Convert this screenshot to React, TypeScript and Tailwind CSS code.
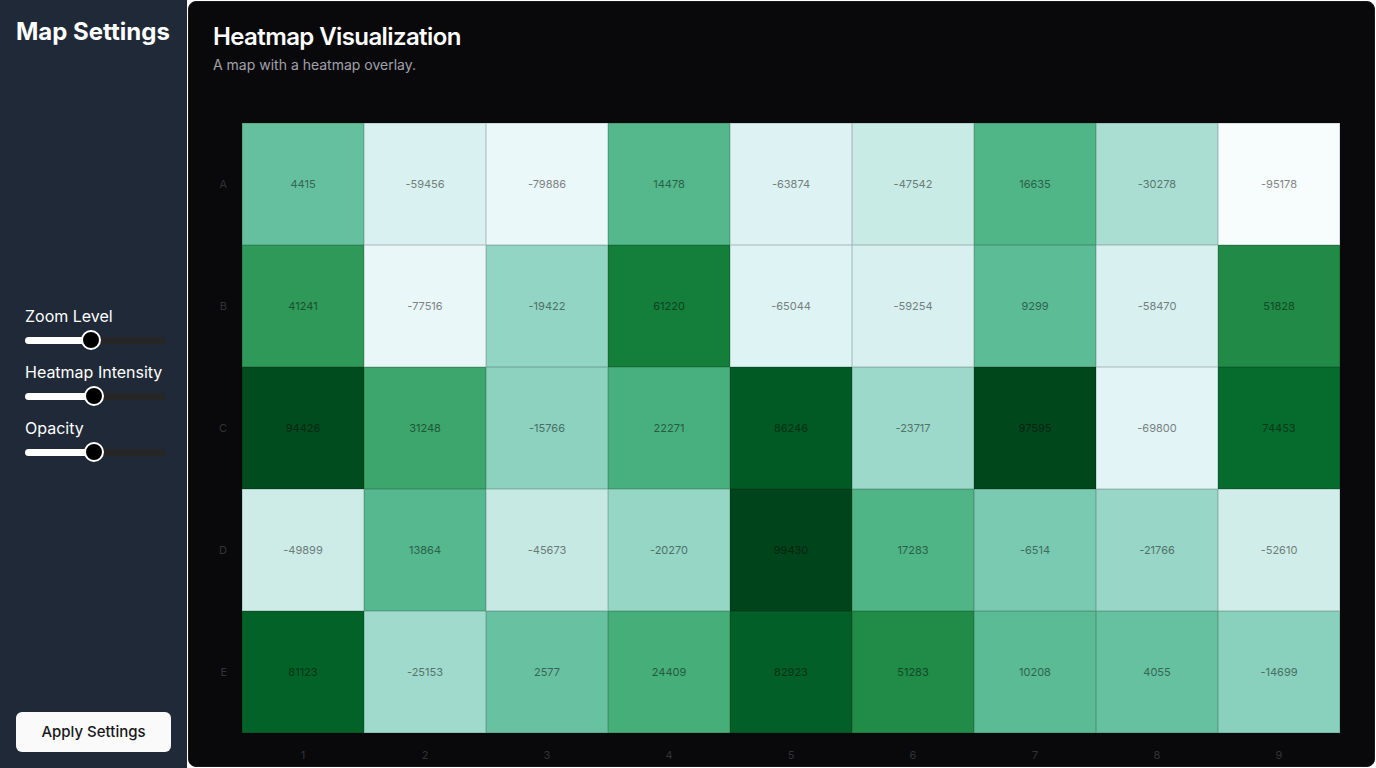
import React from "react";

const BuGn = ["f7fcfd", "e5f5f9", "ccece6", "99d8c9", "66c2a4", "41ae76", "238b45", "006d2c", "00441b"].map((h) => [
  parseInt(h.slice(0, 2), 16),
  parseInt(h.slice(2, 4), 16),
  parseInt(h.slice(4, 6), 16),
]);

function basis(t1: number, v0: number, v1: number, v2: number, v3: number) {
  const t2 = t1 * t1,
    t3 = t2 * t1;
  return ((1 - 3 * t1 + 3 * t2 - t3) * v0 + (4 - 6 * t2 + 3 * t3) * v1 + (1 + 3 * t1 + 3 * t2 - 3 * t3) * v2 + t3 * v3) / 6;
}

function interp(t: number): number[] {
  const n = BuGn.length - 1;
  const out: number[] = [];
  for (let c = 0; c < 3; c++) {
    const values = BuGn.map((v) => v[c]);
    let tt = t;
    let i: number;
    if (tt <= 0) {
      tt = 0;
      i = 0;
    } else if (tt >= 1) {
      tt = 1;
      i = n - 1;
    } else i = Math.floor(tt * n);
    const v1 = values[i],
      v2 = values[i + 1],
      v0 = i > 0 ? values[i - 1] : 2 * v1 - v2,
      v3 = i < n - 1 ? values[i + 2] : 2 * v2 - v1;
    out.push(basis((tt - i / n) * n, v0, v1, v2, v3));
  }
  return out;
}

const rgb = (c: number[], k = 1) => `rgb(${Math.round(c[0] * k)},${Math.round(c[1] * k)},${Math.round(c[2] * k)})`;

const rows = ["A", "B", "C", "D", "E"];
const data: number[][] = [
  [4415, -59456, -79886, 14478, -63874, -47542, 16635, -30278, -95178],
  [41241, -77516, -19422, 61220, -65044, -59254, 9299, -58470, 51828],
  [94426, 31248, -15766, 22271, 86246, -23717, 97595, -69800, 74453],
  [-49899, 13864, -45673, -20270, 99430, 17283, -6514, -21766, -52610],
  [81123, -25153, 2577, 24409, 82923, 51283, 10208, 4055, -14699],
];
const all = data.flat();
const min = Math.min(...all);
const max = Math.max(...all);

function Slider({ label, fill }: { label: string; fill: number }) {
  return (
    <div>
      <div className="text-base leading-6 text-white">{label}</div>
      <div className="relative mt-[2px] flex h-5 w-[140px] items-center">
        <div className="h-[7px] w-full rounded-full bg-[#262626]" />
        <div className="absolute left-0 top-[6.5px] h-[7px] rounded-full bg-white" style={{ width: fill }} />
        <div
          className="absolute top-0 h-5 w-5 rounded-full border-2 border-white bg-black"
          style={{ left: fill - 10 }}
        />
      </div>
    </div>
  );
}

export default function App() {
  return (
    <div className="flex h-[768px] w-[1376px] bg-white" style={{ fontFamily: "Inter, 'Noto Sans', sans-serif" }}>
      <aside className="flex h-full w-[187px] flex-col bg-[#1f2937] p-4">
        <h1 className="text-2xl font-bold leading-8 text-white">Map Settings</h1>
        <div className="flex flex-1 flex-col justify-center pt-[6px]">
          <div className="flex flex-col gap-[10px] pl-[9px]">
            <Slider label="Zoom Level" fill={66} />
            <Slider label="Heatmap Intensity" fill={69} />
            <Slider label="Opacity" fill={69} />
          </div>
        </div>
        <button className="h-10 w-full rounded-md bg-[#fafafa] text-[15px] font-medium text-[#18181b]">
          Apply Settings
        </button>
      </aside>
      <div className="h-full flex-1 p-px">
        <main className="h-full overflow-hidden rounded-lg border border-[#18181b] bg-[#09090b]">
          <div className="p-6 pt-[23px]">
            <h2 className="text-2xl font-semibold leading-none tracking-tight text-white">Heatmap Visualization</h2>
            <p className="mt-1.5 text-sm text-[#a1a1aa]">A map with a heatmap overlay.</p>
          </div>
          <div className="px-6 pt-6">
            <div className="flex">
              <div className="flex w-[29px] flex-col">
                {rows.map((r) => (
                  <div key={r} className="flex h-[122px] items-center justify-end pr-[15px] text-[11px] text-[#333333]">
                    {r}
                  </div>
                ))}
              </div>
              <div className="grid w-[1098px] grid-cols-9">
                {data.map((row, ri) =>
                  row.map((v, ci) => {
                    const c = interp((v - min) / (max - min));
                    return (
                      <div
                        key={`${ri}-${ci}`}
                        className="flex h-[122px] items-center justify-center text-[11px]"
                        style={{
                          backgroundColor: rgb(c),
                          color: rgb(c, Math.pow(0.7, 1.8)),
                          boxShadow: `inset 0 0 0 0.5px ${rgb(c, Math.pow(0.7, 0.8))}`,
                        }}
                      >
                        {v}
                      </div>
                    );
                  })
                )}
              </div>
            </div>
            <div className="ml-[29px] mt-4 grid w-[1098px] grid-cols-9">
              {data[0].map((_, i) => (
                <div key={i} className="text-center text-[11px] leading-3 text-[#333333]">
                  {i + 1}
                </div>
              ))}
            </div>
          </div>
        </main>
      </div>
    </div>
  );
}
